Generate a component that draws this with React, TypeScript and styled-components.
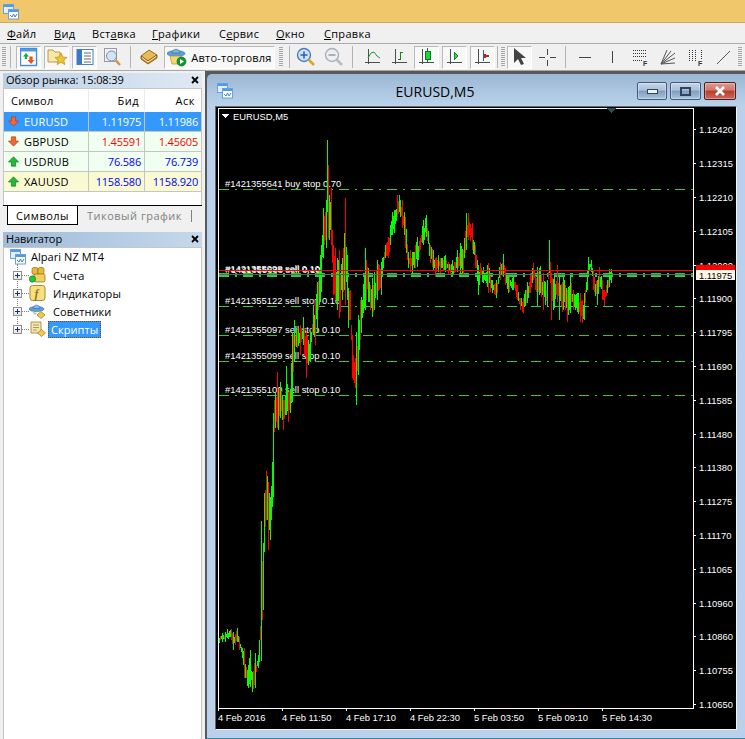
import React from 'react';
import styled, { createGlobalStyle } from 'styled-components';

const UI_FONT = '"Open Sans", "Noto Sans", sans-serif';

const GlobalStyle = createGlobalStyle`
    html, body {
        margin: 0;
        padding: 0;
        height: 100%;
        overflow: hidden;
        background: #f0f0f0;
    }
    * {
        box-sizing: border-box;
    }
`;

const Page = styled.div`
    width: 745px;
    height: 739px;
    display: flex;
    flex-direction: column;
    overflow: hidden;
    font-family: ${UI_FONT};
    font-size: 11px;
    letter-spacing: 0.5px;
    color: #000;
    background: #f0f0f0;
`;

const TitleBar = styled.div`
    height: 23px;
    flex: none;
    padding: 4px 0 0 3px;
    background: #f0c76a;
    border-bottom: 1px solid #c9a95e;
`;

const MenuBar = styled.div`
    height: 20px;
    flex: none;
    display: flex;
    align-items: center;
    background: #f0f0f0;
    letter-spacing: 0.3px;
`;

const MenuItem = styled.div<{ $w: number }>`
    width: ${(p) => p.$w}px;
    padding-left: 7px;
`;

const Toolbar = styled.div`
    height: 28px;
    flex: none;
    display: flex;
    align-items: center;
    padding-left: 2px;
    background: #f0f0f0;
    border-top: 1px solid #a9a9a9;
    border-bottom: 1px solid #a9a9a9;
    overflow: hidden;
`;

const Grip = styled.div<{ $ml?: number }>`
    width: 4px;
    height: 20px;
    flex: none;
    margin-left: ${(p) => p.$ml ?? 0}px;
    background: repeating-linear-gradient(#a6a6a6 0 1px, #f0f0f0 1px 2px);
`;

const ToolSep = styled.div<{ $ml: number }>`
    width: 1px;
    height: 22px;
    flex: none;
    margin-left: ${(p) => p.$ml}px;
    background: #b4b4b4;
`;

const ToolButton = styled.div<{ $ml: number; $on?: boolean; $w?: number }>`
    width: ${(p) => p.$w ?? 25}px;
    height: 23px;
    flex: none;
    display: flex;
    align-items: center;
    justify-content: center;
    gap: 4px;
    margin-left: ${(p) => p.$ml}px;
    background: ${(p) => (p.$on ? '#f8f8f8' : 'transparent')};
    border: 1px solid transparent;
    border-color: ${(p) => (p.$on ? '#b9b9b9 #fff #fff #b9b9b9' : 'transparent')};
`;

const ButtonLabel = styled.span`
    letter-spacing: 0.25px;
`;

const Main = styled.div`
    flex: 1;
    min-height: 0;
    display: flex;
`;

const Side = styled.div`
    width: 205px;
    flex: none;
    display: flex;
    flex-direction: column;
    padding: 2px 3px 0 3px;
`;

const PanelHead = styled.div<{ $from: string; $to: string }>`
    height: 15px;
    flex: none;
    display: flex;
    align-items: center;
    justify-content: space-between;
    padding: 0 3px 2px 3px;
    background: linear-gradient(90deg, ${(p) => p.$from}, ${(p) => p.$to});
    line-height: 13px;
    letter-spacing: -0.1px;
`;

const MarketBox = styled.div`
    height: 117px;
    flex: none;
    background: #fff;
    border: 1px solid #c6c6c6;
    border-bottom: 0;
`;

const Row = styled.div<{ $bg: string; $color?: string; $head?: boolean }>`
    height: ${(p) => (p.$head ? 23 : 20)}px;
    display: grid;
    grid-template-columns: 85px 56px 1fr;
    background: ${(p) => p.$bg};
    color: ${(p) => p.$color ?? '#000'};
    border-bottom: 1px solid ${(p) => (p.$head ? 'transparent' : '#c4c4c4')};
`;

const Cell = styled.div<{ $head?: boolean; $color?: string; $pr: number }>`
    display: flex;
    align-items: center;
    justify-content: flex-end;
    padding-right: ${(p) => p.$pr}px;
    color: ${(p) => p.$color ?? 'inherit'};
    letter-spacing: ${(p) => (p.$head ? 0.5 : -0.2)}px;
    border-right: 1px solid ${(p) => (p.$head ? '#e4ecf5' : '#c4c4c4')};
    &:last-child {
        border-right: 0;
    }
`;

const SymbolCell = styled(Cell)`
    justify-content: flex-start;
    gap: 5px;
    padding-left: ${(p) => (p.$head ? 7 : 4)}px;
    letter-spacing: 0.2px;
`;

const TabStrip = styled.div`
    height: 23px;
    flex: none;
    display: flex;
    background: #f0f0f0;
    border-top: 1px solid #000;
    padding-left: 4px;
`;

const Tab = styled.div<{ $active?: boolean; $w: number }>`
    width: ${(p) => p.$w}px;
    height: 19px;
    display: flex;
    align-items: center;
    justify-content: center;
    background: ${(p) => (p.$active ? '#fff' : 'transparent')};
    color: ${(p) => (p.$active ? '#000' : '#808080')};
    border-right: 1px solid ${(p) => (p.$active ? '#000' : 'transparent')};
    border-bottom: 1px solid ${(p) => (p.$active ? '#000' : 'transparent')};
    border-left: 1px solid ${(p) => (p.$active ? '#000' : 'transparent')};
`;

const TabDivider = styled.div`
    width: 1px;
    height: 12px;
    margin-top: 4px;
    background: #808080;
`;

const NavGap = styled.div`
    height: 4px;
    flex: none;
`;

const NavTree = styled.div`
    flex: 1;
    background: #fff;
    border: 1px solid #c6c6c6;
    border-bottom: 0;
    position: relative;
    letter-spacing: 0.05px;
`;

const TreeRoot = styled.div`
    height: 17px;
    margin-bottom: 1px;
    display: flex;
    align-items: center;
    gap: 5px;
    padding-left: 6px;
`;

const TreeLine = styled.div`
    position: absolute;
    left: 13px;
    top: 16px;
    height: 66px;
    border-left: 1px dotted #808080;
`;

const TreeRow = styled.div`
    height: 18px;
    display: flex;
    align-items: center;
    padding-left: 9px;
    position: relative;
`;

const Expander = styled.div`
    width: 9px;
    height: 9px;
    flex: none;
    position: relative;
    background: linear-gradient(#fff, #e4e4e4);
    border: 1px solid #8f8f8f;
    z-index: 1;
    &::before {
        content: '';
        position: absolute;
        left: 1px;
        top: 3px;
        width: 5px;
        height: 1px;
        background: #1b2f6b;
    }
    &::after {
        content: '';
        position: absolute;
        left: 3px;
        top: 1px;
        width: 1px;
        height: 5px;
        background: #1b2f6b;
    }
`;

const TreeDots = styled.div`
    width: 7px;
    flex: none;
    border-top: 1px dotted #808080;
`;

const TreeLabel = styled.div<{ $selected?: boolean }>`
    height: 17px;
    line-height: 15px;
    margin-left: ${(p) => (p.$selected ? 2 : 4)}px;
    padding: 0 2px;
    background: ${(p) => (p.$selected ? '#3399ff' : 'transparent')};
    color: ${(p) => (p.$selected ? '#fff' : '#000')};
    border: 1px dotted ${(p) => (p.$selected ? '#7a4a00' : 'transparent')};
`;

const MdiArea = styled.div`
    flex: 1;
    min-width: 0;
    padding: 3px 0 0 2px;
    background: #595959;
    display: flex;
`;

const ChildWindow = styled.div`
    flex: 1;
    min-width: 0;
    display: flex;
    flex-direction: column;
    padding: 0 8px 8px 8px;
    border-top-left-radius: 5px;
    border-bottom: 1px solid #2c8aa6;
    background: linear-gradient(#9cb7d3 0, #bad3ec 32px, #b9d1ea 32px);
`;

const WindowTitle = styled.div`
    height: 32px;
    flex: none;
    display: flex;
    align-items: center;
    padding: 2px 0 0 2px;
    font-size: 14px;
    letter-spacing: 0;
`;

const TitleText = styled.div`
    flex: 1;
    text-align: center;
    color: #000;
`;

const WinButtons = styled.div`
    display: flex;
    gap: 3px;
    margin-right: 1px;
`;

const WinButton = styled.div<{ $close?: boolean; $w: number }>`
    width: ${(p) => p.$w}px;
    height: 18px;
    display: flex;
    align-items: center;
    justify-content: center;
    border: 1px solid ${(p) => (p.$close ? '#4e1b1b' : '#44597a')};
    border-radius: 2px;
    background: ${(p) =>
        p.$close
            ? 'linear-gradient(#dd9a90 0, #d0756a 45%, #b83c2f 50%, #c8685c 100%)'
            : 'linear-gradient(#c3d5e8 0, #a9c1da 45%, #7f9dbd 50%, #a9c3dd 100%)'};
    box-shadow: inset 0 0 0 1px rgba(255, 255, 255, 0.35);
`;

const ChartFrame = styled.div`
    flex: 1;
    min-height: 0;
    background: #000;
    border: 1px solid;
    border-color: #696969 #f4f4f4 #f4f4f4 #696969;
`;

const ChartSvg = styled.svg`
    display: block;
    width: 100%;
    height: 100%;
    font-family: "Liberation Sans", Arial, sans-serif;
    font-size: 9.4px;
    letter-spacing: 0;
`;

const AppIcon = ({ size = 16 }: { size?: number }) => (
    <svg width={size} height={size} viewBox="0 0 16 16">
        <rect x="0.5" y="0.5" width="10" height="9" fill="#e3eefb" stroke="#6aa0dc" />
        <rect x="1" y="1" width="9" height="2" fill="#4f9bea" />
        <rect x="5.5" y="5.5" width="10" height="9.5" fill="#fff" stroke="#6aa0dc" />
        <rect x="6" y="6" width="9" height="2" fill="#4f9bea" />
        <polyline points="7,11 9,13 10.5,10 12,13 14,10" fill="none" stroke="#3f7fc5" />
    </svg>
);

const CloseMark = () => (
    <svg width="8" height="8" viewBox="0 0 8 8">
        <path d="M1 1 L7 7 M7 1 L1 7" stroke="#000" strokeWidth="1.8" />
    </svg>
);

const MarketIcon = () => (
    <svg width="18" height="20" viewBox="0 0 18 20">
        <rect x="0.5" y="1.5" width="16" height="17" fill="#fff" stroke="#3f8ee0" strokeWidth="1.4" />
        <rect x="1" y="2" width="15" height="2.5" fill="#4f9bea" />
        <path d="M5 6 L8 9.5 H6.2 V12 H3.8 V9.5 H2 Z" transform="translate(1 0)" fill="#1fae3c" />
        <path d="M11 16 L14.5 12 H12.6 V8.5 H9.4 V12 H7.5 Z" transform="translate(0 1)" fill="#e8502a" />
    </svg>
);

const FolderStarIcon = () => (
    <svg width="20" height="20" viewBox="0 0 20 20">
        <path d="M1 3 H6 L8 5 H13 V15 H1 Z" fill="#f7e7a8" stroke="#b79a4a" />
        <path d="M14 6 L15.8 10 L20 10.4 L16.8 13.2 L17.8 17.6 L14 15.2 L10.2 17.6 L11.2 13.2 L8 10.4 L12.2 10 Z" fill="#f0c330" stroke="#b48a1c" strokeWidth="0.7" />
    </svg>
);

const NavigatorIcon = () => (
    <svg width="18" height="18" viewBox="0 0 18 18">
        <rect x="1" y="1.5" width="16" height="15" fill="#fff" stroke="#4a7fc0" />
        <rect x="1" y="1.5" width="5" height="15" fill="#3a78c8" />
        <path d="M8 5 H15 M8 8 H15 M8 11 H15 M8 14 H15" stroke="#666" />
    </svg>
);

const TesterIcon = () => (
    <svg width="20" height="20" viewBox="0 0 20 20">
        <rect x="1.5" y="1.5" width="12" height="13" fill="#eef1f6" stroke="#9a9aa4" />
        <circle cx="8.5" cy="9" r="5" fill="#d4e4f6" stroke="#7e8aa0" />
        <path d="M12.5 13 L17 18" stroke="#c99a3a" strokeWidth="2.4" />
    </svg>
);

const BookIcon = () => (
    <svg width="18" height="16" viewBox="0 0 18 16">
        <path d="M1 7 L9 1 L17 6 L8 12 Z" fill="#e8bb55" stroke="#7a5010" strokeWidth="0.8" />
        <path d="M1 7 L8 12 L17 6 L17 9 L8 15 L1 10 Z" fill="#c98a2c" stroke="#7a5010" strokeWidth="0.8" />
        <path d="M2 8.5 L8 13 L16 7.5" fill="none" stroke="#fff2c6" />
    </svg>
);

const AutoTradeIcon = () => (
    <svg width="20" height="20" viewBox="0 0 20 20">
        <ellipse cx="9" cy="6.5" rx="9" ry="3" fill="#5d9ed6" stroke="#2f6ca3" strokeWidth="0.6" />
        <path d="M5 6 C5 1 13 1 13 6 Z" fill="#7bb4e2" stroke="#2f6ca3" strokeWidth="0.6" />
        <path d="M3 9 H14 L15 17 H5 Z" fill="#f3d873" stroke="#b09028" strokeWidth="0.7" />
        <circle cx="14.5" cy="14.5" r="4.5" fill="#0c9a2e" stroke="#056a1d" strokeWidth="0.6" />
        <path d="M13 12 L17 14.5 L13 17 Z" fill="#fff" />
    </svg>
);

const ZoomIcon = ({ plus }: { plus?: boolean }) => {
    const ring = plus ? '#4d7fc0' : '#aab0b6';
    const fill = plus ? '#cfe2f8' : '#eceff2';
    const mark = plus ? '#2d66b0' : '#9aa0a6';
    return (
        <svg width="20" height="20" viewBox="0 0 20 20">
            <circle cx="8" cy="8" r="6.5" fill={fill} stroke={ring} strokeWidth="1.4" />
            <path d="M4.5 8 H11.5" stroke={mark} strokeWidth="1.6" />
            {plus && <path d="M8 4.5 V11.5" stroke={mark} strokeWidth="1.6" />}
            <path d="M12.5 12.5 L18 18" stroke={plus ? '#d9a827' : '#b8bcc0'} strokeWidth="2.6" />
        </svg>
    );
};

const Axes = () => <path d="M4.5 1 V16 M1 14.5 H16" stroke="#4d4d4d" fill="none" />;

const ChartIcon = ({ kind }: { kind: 'line' | 'bar' | 'candle' | 'shift' | 'scale' }) => (
    <svg width="17" height="18" viewBox="0 0 17 18" shapeRendering="crispEdges">
        <Axes />
        {kind === 'line' && <path d="M4 10 L7 5 L10 4 L13 8 L16 10" stroke="#1f9a3a" fill="none" shapeRendering="auto" />}
        {kind === 'bar' && <path d="M9.5 12 V4 M7 11.5 H9.5 M9.5 4.5 H12" stroke="#0a8a1c" strokeWidth="1.4" fill="none" />}
        {kind === 'candle' && (
            <>
                <path d="M9.5 0 V14" stroke="#0a7a1a" />
                <rect x="7" y="3" width="5" height="8" fill="#19d838" stroke="#0a7a1a" />
            </>
        )}
        {kind === 'shift' && <path d="M8 4 L12 8 L8 12 Z" fill="#3fd65a" stroke="#0a8a1c" />}
        {kind === 'scale' && (
            <>
                <path d="M9.5 2 V13" stroke="#1a6aa8" />
                <path d="M15 8 H11 M11 6 L11 10" stroke="#b02a14" strokeWidth="2" />
            </>
        )}
    </svg>
);

const CursorIcon = () => (
    <svg width="16" height="20" viewBox="0 0 16 20">
        <path d="M2 1 L2 16 L6 12 L9 18 L12 17 L9 11 L14 11 Z" fill="#444" />
    </svg>
);

const CrossIcon = () => (
    <svg width="17" height="17" viewBox="0 0 17 17" shapeRendering="crispEdges">
        <path d="M0 8.5 H6 M11 8.5 H17 M8.5 0 V6 M8.5 11 V17" stroke="#444" />
    </svg>
);

const HLineIcon = () => (
    <svg width="14" height="4" viewBox="0 0 14 4" shapeRendering="crispEdges">
        <path d="M1 2 H13" stroke="#444" strokeWidth="1" />
    </svg>
);

const VLineIcon = () => (
    <svg width="4" height="14" viewBox="0 0 4 14" shapeRendering="crispEdges">
        <path d="M2 1 V13" stroke="#444" />
    </svg>
);

const FiboIcon = () => (
    <svg width="16" height="17" viewBox="0 0 16 17" shapeRendering="crispEdges">
        <path d="M1 1.5 H15 M1 4.5 H15 M1 7.5 H15 M1 11.5 H11" stroke="#333" strokeDasharray="1 1" />
        <text x="11" y="16.5" fontSize="7" fontWeight="700" fill="#333" fontFamily="Liberation Sans">F</text>
    </svg>
);

const FanIcon = () => (
    <svg width="16" height="16" viewBox="0 0 16 16">
        <path d="M1 15 L7 1 M1 15 L11 2 M1 15 L15 4 M1 15 L15 9 M1 15 L15 14" stroke="#555" fill="none" />
    </svg>
);

const FiboTimeIcon = () => (
    <svg width="16" height="17" viewBox="0 0 16 17" shapeRendering="crispEdges">
        <path d="M1.5 1 V13 M4.5 1 V13 M7.5 1 V13 M13.5 1 V10" stroke="#333" strokeDasharray="1 1" />
        <text x="10" y="16.5" fontSize="7" fontWeight="700" fill="#333" fontFamily="Liberation Sans">F</text>
    </svg>
);

const TrendIcon = () => (
    <svg width="15" height="15" viewBox="0 0 15 15">
        <path d="M1 14 L14 1" stroke="#555" />
    </svg>
);

const TickArrow = ({ up }: { up: boolean }) => (
    <svg width="11" height="11" viewBox="0 0 13 12">
        {up ? (
            <path d="M6.5 0.5 L12.5 6.5 H9 V11.5 H4 V6.5 H0.5 Z" fill="#27b83a" stroke="#0d7a1d" strokeWidth="0.8" />
        ) : (
            <path d="M6.5 11.5 L12.5 5.5 H9 V0.5 H4 V5.5 H0.5 Z" fill="#ee6a3c" stroke="#b23a14" strokeWidth="0.8" />
        )}
    </svg>
);

const AccountsIcon = () => (
    <svg width="17" height="16" viewBox="0 0 17 16">
        <rect x="3" y="0.5" width="6" height="7" rx="2" fill="#e8b83c" stroke="#8a6a12" strokeWidth="0.7" />
        <rect x="9" y="0.5" width="6" height="7" rx="2" fill="#e8b83c" stroke="#8a6a12" strokeWidth="0.7" />
        <rect x="5" y="7" width="11" height="8" rx="1.5" fill="#f2cf5f" stroke="#8a6a12" strokeWidth="0.7" />
        <circle cx="3.5" cy="12" r="3.2" fill="#27c13c" stroke="#0d7a1d" strokeWidth="0.6" />
    </svg>
);

const IndicatorIcon = () => (
    <svg width="17" height="16" viewBox="0 0 16 16">
        <rect x="0.5" y="0.5" width="15" height="15" rx="2.5" fill="#f7df84" stroke="#a98a2a" />
        <text x="5" y="12.5" fontSize="12" fontStyle="italic" fontWeight="700" fill="#9a7410" fontFamily="Liberation Serif">f</text>
    </svg>
);

const ExpertIcon = () => (
    <svg width="17" height="16" viewBox="0 0 17 16">
        <ellipse cx="7.5" cy="6" rx="7.5" ry="2.6" fill="#5d9ed6" stroke="#2f6ca3" strokeWidth="0.6" />
        <path d="M4 5.5 C4 1 11 1 11 5.5 Z" fill="#83bae6" stroke="#2f6ca3" strokeWidth="0.6" />
        <path d="M3 8.5 L8 10 L6 12 Z" fill="#d8c27a" />
        <path d="M12 8.5 L16 12 L12 15.5 L8 12 Z" fill="#f0c84a" stroke="#9a7a18" strokeWidth="0.7" />
    </svg>
);

const ScriptIcon = () => (
    <svg width="17" height="16" viewBox="0 0 17 16">
        <path d="M2 1 H12 V12 H2 Z" fill="#f4e6b0" stroke="#9a8034" strokeWidth="0.8" />
        <path d="M4 4 H10 M4 6.5 H10 M4 9 H8" stroke="#a08a44" strokeWidth="0.8" />
        <path d="M12.5 8.5 L16.5 12 L12.5 15.5 L8.5 12 Z" fill="#f0c84a" stroke="#9a7a18" strokeWidth="0.7" />
    </svg>
);

// [x, top, bottom, colour?] read off the reference, the rest is filled in between
type Key = [number, number, number, ('g' | 'r')?];
const KEYS: Key[] = [
    [219, 638, 643, 'g'], [222, 633, 642, 'g'], [225, 632, 642, 'g'], [227, 629, 638, 'g'], [231, 629, 640, 'r'],
    [233, 632, 650, 'g'], [237, 628, 642, 'g'], [239, 637, 650, 'r'], [242, 648, 658, 'g'], [244, 648, 678, 'r'],
    [247, 670, 686, 'g'], [248, 665, 688, 'g'], [250, 650, 687, 'g'], [252, 672, 692, 'g'], [255, 653, 688, 'g'],
    [258, 655, 668, 'g'], [259, 640, 662, 'g'], [260, 626, 640, 'r'], [261, 521, 661, 'g'], [262, 561, 620, 'r'], [263, 543, 610, 'g'],
    [264, 493, 552, 'g'], [266, 471, 520, 'r'], [267, 476, 520, 'g'], [268, 482, 550, 'r'], [270, 497, 540, 'g'],
    [272, 462, 507, 'g'], [273, 413, 497, 'g'], [274, 400, 432, 'r'], [275, 393, 428, 'g'], [277, 372, 428, 'r'],
    [278, 390, 430, 'g'], [280, 382, 418, 'g'], [282, 395, 420, 'g'], [283, 400, 430, 'r'], [285, 395, 415, 'g'],
    [286, 366, 415, 'g'], [288, 392, 422, 'r'], [290, 390, 413, 'g'], [292, 332, 402, 'g'], [294, 320, 362, 'g'],
    [297, 330, 348, 'r'], [300, 325, 355, 'r'], [303, 317, 345, 'g'], [306, 332, 378, 'r'], [308, 340, 365, 'g'],
    [310, 332, 362, 'g'], [313, 305, 335, 'g'], [315, 300, 345, 'r'], [317, 282, 332, 'g'], [319, 270, 305, 'g'],
    [320, 255, 302, 'g'], [321, 245, 292, 'g'], [323, 208, 258, 'g'], [325, 212, 240, 'r'], [326, 200, 248, 'g'],
    [327, 140, 212, 'g'], [328, 165, 238, 'r'], [329, 195, 240, 'g'], [331, 188, 245, 'r'], [333, 245, 295, 'r'],
    [335, 248, 300, 'r'], [337, 258, 310, 'g'], [339, 250, 318, 'r'], [342, 258, 300, 'g'], [344, 233, 290, 'g'],
    [345, 198, 305, 'r'], [347, 255, 300, 'g'], [348, 288, 328, 'g'], [350, 290, 320, 'r'], [352, 335, 378, 'r'],
    [355, 358, 388, 'r'], [356, 332, 405, 'g'], [358, 315, 375, 'g'], [360, 300, 340, 'r'], [361, 297, 333, 'g'],
    [364, 275, 308, 'g'], [365, 248, 310, 'g'], [366, 260, 300, 'r'], [368, 268, 302, 'g'], [370, 285, 310, 'r'],
    [372, 278, 317, 'g'], [374, 272, 310, 'g'], [377, 260, 300, 'g'], [379, 265, 290, 'r'], [381, 262, 295, 'g'],
    [382, 258, 277, 'g'], [385, 245, 258, 'g'], [388, 237, 258, 'r'], [390, 225, 245, 'g'], [392, 212, 235, 'g'],
    [394, 210, 233, 'g'], [397, 195, 217, 'r'], [399, 195, 212, 'g'], [402, 200, 228, 'r'], [405, 217, 248, 'r'],
    [408, 252, 268, 'g'], [410, 250, 272, 'r'], [412, 252, 277, 'g'], [415, 245, 268, 'r'], [417, 237, 267, 'g'],
    [420, 238, 250, 'r'], [423, 220, 245, 'g'], [426, 215, 237, 'g'], [430, 245, 263, 'r'], [433, 250, 270, 'g'],
    [435, 258, 277, 'r'], [438, 255, 272, 'g'], [440, 258, 273, 'r'], [445, 255, 272, 'g'], [448, 262, 275, 'r'],
    [452, 260, 277, 'g'], [455, 262, 272, 'r'], [457, 250, 272, 'g'], [460, 243, 277, 'g'], [463, 250, 275, 'r'],
    [466, 213, 250, 'g'], [468, 213, 240, 'r'], [472, 223, 250, 'r'], [475, 245, 268, 'r'], [478, 265, 295, 'g'],
    [480, 263, 278, 'r'], [483, 267, 283, 'g'], [487, 265, 287, 'g'], [488, 263, 293, 'r'], [492, 280, 293, 'g'],
    [496, 280, 298, 'g'], [500, 262, 280, 'r'], [503, 254, 277, 'g'], [505, 268, 285, 'r'], [508, 277, 293, 'g'],
    [513, 277, 290, 'g'], [517, 285, 300, 'r'], [520, 298, 310, 'r'], [523, 298, 313, 'r'], [525, 290, 306, 'g'],
    [527, 282, 303, 'g'], [530, 273, 293, 'r'], [533, 263, 280, 'r'], [537, 267, 306, 'g'], [540, 266, 293, 'g'],
    [543, 273, 310, 'r'], [547, 280, 307, 'g'], [549, 240, 273, 'g'], [551, 273, 320, 'r'], [554, 273, 308, 'g'],
    [557, 265, 302, 'r'], [559, 273, 320, 'g'], [563, 273, 310, 'g'], [565, 285, 310, 'r'], [567, 290, 322, 'r'],
    [570, 273, 313, 'g'], [573, 290, 310, 'r'], [577, 293, 312, 'g'], [580, 293, 322, 'r'], [582, 300, 323, 'r'],
    [584, 293, 320, 'g'], [587, 270, 290, 'g'], [588, 257, 273, 'g'], [591, 260, 272, 'g'], [593, 270, 290, 'r'],
    [597, 280, 305, 'g'], [599, 267, 287, 'r'], [602, 280, 300, 'r'], [604, 290, 306, 'r'], [607, 280, 293, 'g'],
    [609, 269, 287, 'g'], [611, 269, 283, 'g'],
];

type Bar = { x: number; top: number; bottom: number; up: boolean };

const buildBars = (): Bar[] => {
    let seed = 4242;
    const rnd = () => {
        seed = (seed * 16807) % 2147483647;
        return seed / 2147483647;
    };
    const bars: Bar[] = [];
    KEYS.forEach((k, i) => {
        bars.push({ x: k[0], top: k[1], bottom: k[2], up: k[3] !== 'r' });
        const next = KEYS[i + 1];
        if (!next) return;
        for (let x = k[0] + 1; x < next[0]; x++) {
            const t = (x - k[0]) / (next[0] - k[0]);
            const top = k[1] + (next[1] - k[1]) * t;
            const bottom = k[2] + (next[2] - k[2]) * t;
            const span = bottom - top;
            const a = top + span * rnd() * 0.4;
            const b = bottom - span * rnd() * 0.4;
            bars.push({ x, top: a, bottom: b, up: rnd() > 0.45 });
        }
    });
    return bars;
};

const BARS = buildBars();

const PRICES: [number, string][] = [
    [129, '1.12420'], [163, '1.12315'], [197, '1.12210'], [231, '1.12105'], [265, '1.12000'],
    [298, '1.11900'], [332, '1.11795'], [366, '1.11690'], [400, '1.11585'], [434, '1.11480'],
    [467, '1.11380'], [501, '1.11275'], [535, '1.11170'], [569, '1.11065'], [603, '1.10960'],
    [636, '1.10860'], [670, '1.10755'], [704, '1.10650'],
];

const TIMES: [number, string][] = [
    [218, '4 Feb 2016'], [282, '4 Feb 11:50'], [346, '4 Feb 17:10'], [410, '4 Feb 22:30'],
    [474, '5 Feb 03:50'], [538, '5 Feb 09:10'], [602, '5 Feb 14:30'],
];

const ORDERS: [number, number, string][] = [
    [187, 189, '#1421355641 buy stop 0.70'],
    [304, 306, '#1421355122 sell stop 0.10'],
    [333, 335, '#1421355097 sell stop 0.10'],
    [359, 361, '#1421355099 sell stop 0.10'],
    [393, 395, '#1421355100 sell stop 0.10'],
];

const ORDER_GREEN = '#32cd32';

const Chart = () => (
    <ChartSvg viewBox="216 107 520 622" shapeRendering="crispEdges">
        <path d="M218.5 108.5 H693.5 V708.5 H218.5 Z" fill="none" stroke="#fff" />
        <path d="M606 108 H616 L611 113 Z" fill="#2f4f4f" />
        <path d="M222 114 H229 L225.5 118 Z" fill="#fff" />
        <text x="233" y="119.5" fill="#fff">EURUSD,M5</text>

        {ORDERS.map(([ty, ly, label]) => (
            <g key={label}>
                <text x="225" y={ty} fill="#fff">{label}</text>
                <path d={`M219 ${ly + 0.5} H693`} stroke={ORDER_GREEN} strokeDasharray="10 6 2 6" />
            </g>
        ))}
        <text x="225" y="272" fill="#fff">#1421355098 sell 0.10</text>
        <text x="225.5" y="272.5" fill="#fff">#1421355638 sell 0.10</text>
        <path d="M219 273.5 H693" stroke={ORDER_GREEN} strokeDasharray="10 6 2 6" />
        <path d="M219 274.5 H693" stroke={ORDER_GREEN} strokeDasharray="10 6 2 6" />
        <path d="M219 275.5 H693" stroke={ORDER_GREEN} strokeDasharray="10 6 2 6" />
        <path d="M219 276.5 H693" stroke={ORDER_GREEN} strokeDasharray="10 6 2 6" />

        {BARS.map((b) => (
            <rect
                key={b.x}
                x={b.x}
                y={Math.round(b.top)}
                width="1"
                height={Math.max(1, Math.round(b.bottom - b.top))}
                fill={b.up ? '#00ff00' : '#ff0000'}
            />
        ))}

        <path d="M219 274.5 H693" stroke="#4a6a6a" />
        <path d="M219 270.5 H693" stroke="#ff0000" />

        {PRICES.map(([y, label]) => (
            <g key={label}>
                <path d={`M693 ${y + 0.5} H696`} stroke="#fff" />
                <text x="699" y={y + 3.5} fill="#fff">{label}</text>
            </g>
        ))}
        <rect x="696" y="265" width="39" height="6" fill="#ff0000" />
        <rect x="696" y="270" width="39" height="10" fill="#fdf5e6" />
        <text x="699" y="279" fill="#000">1.11975</text>

        {TIMES.map(([x, label]) => (
            <g key={label}>
                <path d={`M${x + 0.5} 708 V711`} stroke="#fff" />
                <text x={x} y="721" fill="#fff">{label}</text>
            </g>
        ))}
    </ChartSvg>
);

const QUOTES = [
    { name: 'EURUSD', bid: '1.11975', ask: '1.11986', up: false, bg: '#3399ff', color: '#fff', price: '#fff' },
    { name: 'GBPUSD', bid: '1.45591', ask: '1.45605', up: false, bg: '#f0fff0', color: '#000', price: '#ff0000' },
    { name: 'USDRUB', bid: '76.586', ask: '76.739', up: true, bg: '#f0fff0', color: '#000', price: '#0000ff' },
    { name: 'XAUUSD', bid: '1158.580', ask: '1158.920', up: true, bg: '#fafad2', color: '#000', price: '#0000ff' },
];

const NAV_ITEMS: { label: string; icon: React.ReactNode; selected?: boolean }[] = [
    { label: 'Счета', icon: <AccountsIcon /> },
    { label: 'Индикаторы', icon: <IndicatorIcon /> },
    { label: 'Советники', icon: <ExpertIcon /> },
    { label: 'Скрипты', icon: <ScriptIcon />, selected: true },
];

export default function App() {
    return (
        <Page>
            <GlobalStyle />
            <TitleBar>
                <AppIcon />
            </TitleBar>
            <MenuBar>
                <MenuItem $w={47}><u>Ф</u>айл</MenuItem>
                <MenuItem $w={38}><u>В</u>ид</MenuItem>
                <MenuItem $w={60}>Вст<u>а</u>вка</MenuItem>
                <MenuItem $w={67}><u>Г</u>рафики</MenuItem>
                <MenuItem $w={57}>С<u>е</u>рвис</MenuItem>
                <MenuItem $w={48}><u>О</u>кно</MenuItem>
                <MenuItem $w={60}><u>С</u>правка</MenuItem>
            </MenuBar>
            <Toolbar>
                <Grip />
                <ToolSep $ml={4} />
                <ToolButton $ml={5} $on><MarketIcon /></ToolButton>
                <ToolButton $ml={3} $on><FolderStarIcon /></ToolButton>
                <ToolButton $ml={3} $on><NavigatorIcon /></ToolButton>
                <ToolButton $ml={3}><TesterIcon /></ToolButton>
                <ToolSep $ml={5} />
                <ToolButton $ml={5}><BookIcon /></ToolButton>
                <ToolButton $ml={3} $on $w={111}><AutoTradeIcon /><ButtonLabel>Авто-торговля</ButtonLabel></ToolButton>
                <Grip $ml={4} />
                <ToolSep $ml={6} />
                <ToolButton $ml={3}><ZoomIcon plus /></ToolButton>
                <ToolButton $ml={3}><ZoomIcon /></ToolButton>
                <ToolSep $ml={6} />
                <ToolButton $ml={7}><ChartIcon kind="line" /></ToolButton>
                <ToolButton $ml={2}><ChartIcon kind="bar" /></ToolButton>
                <ToolButton $ml={2} $on><ChartIcon kind="candle" /></ToolButton>
                <ToolButton $ml={3} $on><ChartIcon kind="shift" /></ToolButton>
                <ToolButton $ml={3} $on><ChartIcon kind="scale" /></ToolButton>
                <ToolSep $ml={2} />
                <Grip $ml={3} />
                <ToolButton $ml={2} $on><CursorIcon /></ToolButton>
                <ToolButton $ml={3}><CrossIcon /></ToolButton>
                <ToolSep $ml={5} />
                <ToolButton $ml={6}><HLineIcon /></ToolButton>
                <ToolButton $ml={2}><VLineIcon /></ToolButton>
                <ToolButton $ml={3}><FiboIcon /></ToolButton>
                <ToolButton $ml={3}><FanIcon /></ToolButton>
                <ToolButton $ml={3}><FiboTimeIcon /></ToolButton>
                <ToolButton $ml={3}><TrendIcon /></ToolButton>
                <Grip $ml={2} />
            </Toolbar>
            <Main>
                <Side>
                    <PanelHead $from="#bcd0e5" $to="#dfe9f4">
                        Обзор рынка: 15:08:39
                        <CloseMark />
                    </PanelHead>
                    <MarketBox>
                        <Row $bg="#fff" $head>
                            <SymbolCell $head $pr={5}>Символ</SymbolCell>
                            <Cell $head $pr={5}>Бид</Cell>
                            <Cell $head $pr={6}>Аск</Cell>
                        </Row>
                        {QUOTES.map((q) => (
                            <Row key={q.name} $bg={q.bg} $color={q.color}>
                                <SymbolCell $pr={2}>
                                    <TickArrow up={q.up} />
                                    {q.name}
                                </SymbolCell>
                                <Cell $color={q.price} $pr={3}>{q.bid}</Cell>
                                <Cell $color={q.price} $pr={3}>{q.ask}</Cell>
                            </Row>
                        ))}
                    </MarketBox>
                    <TabStrip>
                        <Tab $active $w={71}>Символы</Tab>
                        <Tab $w={113}>Тиковый график</Tab>
                        <TabDivider />
                    </TabStrip>
                    <NavGap />
                    <PanelHead $from="#9fbcd9" $to="#c6d8eb">
                        Навигатор
                        <CloseMark />
                    </PanelHead>
                    <NavTree>
                        <TreeLine />
                        <TreeRoot>
                            <AppIcon />
                            Alpari NZ MT4
                        </TreeRoot>
                        {NAV_ITEMS.map((item) => (
                            <TreeRow key={item.label}>
                                <Expander />
                                <TreeDots />
                                {item.icon}
                                <TreeLabel $selected={item.selected}>{item.label}</TreeLabel>
                            </TreeRow>
                        ))}
                    </NavTree>
                </Side>
                <MdiArea>
                    <ChildWindow>
                        <WindowTitle>
                            <AppIcon />
                            <TitleText>EURUSD,M5</TitleText>
                            <WinButtons>
                                <WinButton $w={30}>
                                    <svg width="11" height="5"><rect x="0.5" y="0.5" width="10" height="4" fill="#eef3f8" stroke="#33415a" /></svg>
                                </WinButton>
                                <WinButton $w={31}>
                                    <svg width="11" height="9"><rect x="1" y="1" width="9" height="7" fill="none" stroke="#33415a" strokeWidth="2" /></svg>
                                </WinButton>
                                <WinButton $w={32} $close>
                                    <svg width="12" height="10"><path d="M2 1 L10 9 M10 1 L2 9" stroke="#fff" strokeWidth="2.6" /></svg>
                                </WinButton>
                            </WinButtons>
                        </WindowTitle>
                        <ChartFrame>
                            <Chart />
                        </ChartFrame>
                    </ChildWindow>
                </MdiArea>
            </Main>
        </Page>
    );
}
